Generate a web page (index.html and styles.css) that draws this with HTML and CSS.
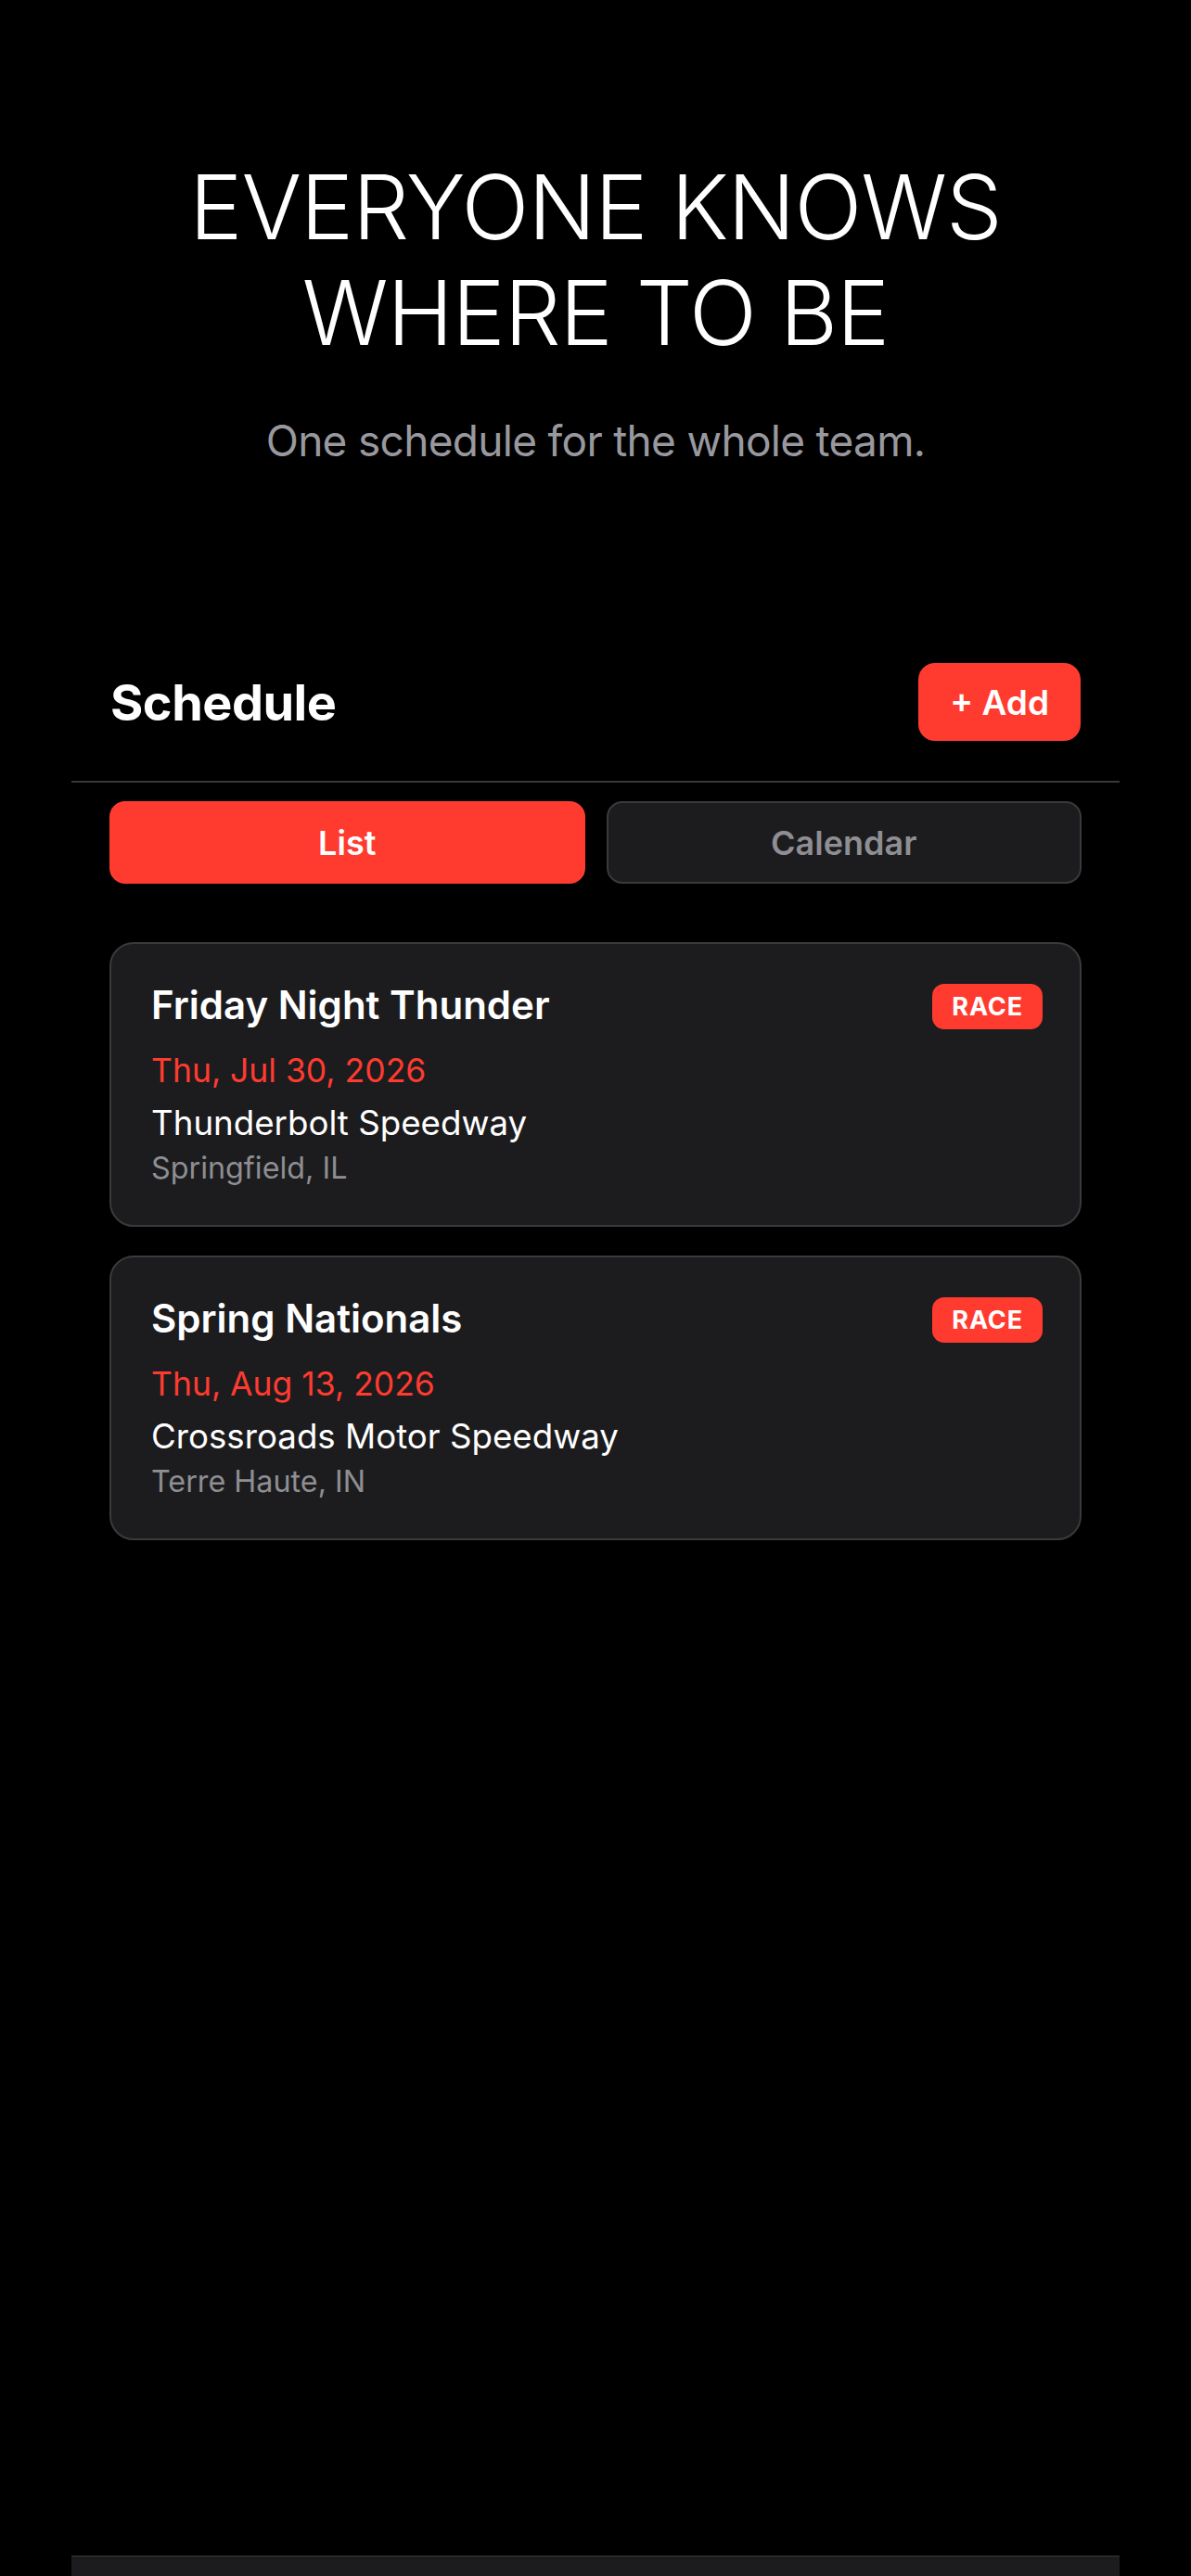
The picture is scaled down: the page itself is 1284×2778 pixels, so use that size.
FILE: index.html
```html
<!DOCTYPE html>
<html lang="en">
<head>
    <meta charset="UTF-8">
    <meta name="viewport" content="width=device-width, initial-scale=1.0">
    <title>Schedule</title>
    <link rel="stylesheet" href="styles.css">
</head>
<body>
    <div class="page">
        <!-- Hero -->
        <header class="hero">
            <h1 class="hero-title">EVERYONE KNOWS<br>WHERE TO BE</h1>
            <p class="hero-sub">One schedule for the whole team.</p>
        </header>

        <!-- Schedule Section -->
        <section class="schedule">
            <div class="schedule-header">
                <h2>Schedule</h2>
                <button class="add-btn">+ Add</button>
            </div>

            <div class="schedule-body">
                <div class="view-toggle">
                    <button class="toggle-btn active">List</button>
                    <button class="toggle-btn">Calendar</button>
                </div>

                <div class="event-list">
                    <div class="event-card">
                        <div class="event-top">
                            <h3>Friday Night Thunder</h3>
                            <span class="badge">RACE</span>
                        </div>
                        <p class="event-date">Thu, Jul 30, 2026</p>
                        <p class="event-venue">Thunderbolt Speedway</p>
                        <p class="event-city">Springfield, IL</p>
                    </div>

                    <div class="event-card">
                        <div class="event-top">
                            <h3>Spring Nationals</h3>
                            <span class="badge">RACE</span>
                        </div>
                        <p class="event-date">Thu, Aug 13, 2026</p>
                        <p class="event-venue">Crossroads Motor Speedway</p>
                        <p class="event-city">Terre Haute, IN</p>
                    </div>
                </div>
            </div>
        </section>

        <div class="tab-bar"></div>
    </div>
</body>
</html>
```

FILE: styles.css
```css
body {
    font-family: Inter, "Noto Sans", sans-serif;
    margin: 0;
    padding: 0;
    background-color: #000;
    color: #fff;
}

.page {
    min-height: 100vh;
    display: flex;
    flex-direction: column;
}

.hero {
    padding: 166px 40px 0;
    text-align: center;
}

.hero-title {
    margin: 0;
    font-size: 96px;
    font-weight: 300;
    line-height: 114px;
    letter-spacing: -1px;
}

.hero-sub {
    margin: 51px 0 0;
    font-size: 46px;
    line-height: 60px;
    color: #98989e;
    letter-spacing: -0.7px;
}

.schedule {
    margin: 210px 77px 0;
}

.schedule-header {
    display: flex;
    justify-content: space-between;
    align-items: center;
    padding: 0 42px 43px;
    border-bottom: 2px solid #38383a;
}

.schedule-header h2 {
    margin: 0;
    font-size: 54px;
    font-weight: 700;
    letter-spacing: -0.5px;
}

button {
    font-family: inherit;
    border: none;
    cursor: pointer;
}

.add-btn {
    height: 84px;
    padding: 0 34px;
    background-color: #ff3b30;
    color: #fff;
    font-size: 37px;
    font-weight: 600;
    border-radius: 18px;
}

.schedule-body {
    padding: 20px 41px 0;
}

.view-toggle {
    display: grid;
    grid-template-columns: 1fr 1fr;
    gap: 23px;
}

.toggle-btn {
    height: 89px;
    background-color: #1c1c1e;
    color: #8e8e93;
    border: 2px solid #3a3a3c;
    border-radius: 17px;
    font-size: 36px;
    font-weight: 600;
}

.toggle-btn.active {
    background-color: #ff3b30;
    border-color: #ff3b30;
    color: #fff;
}

.event-list {
    margin-top: 63px;
    display: flex;
    flex-direction: column;
    gap: 31px;
}

.event-card {
    background-color: #1c1c1e;
    border: 2px solid #3a3a3c;
    border-radius: 26px;
    padding: 42px 40px 42px 43px;
}

.event-top {
    display: flex;
    justify-content: space-between;
    align-items: flex-start;
}

.event-top h3 {
    margin: 0;
    font-size: 42px;
    font-weight: 600;
    line-height: 48px;
}

.badge {
    margin-top: 1px;
    padding: 0 21px;
    height: 49px;
    line-height: 49px;
    background-color: #ff3b30;
    border-radius: 13px;
    font-size: 27px;
    font-weight: 700;
    letter-spacing: 0.9px;
}

.event-card p {
    margin: 0;
}

.event-date {
    margin-top: 24px !important;
    font-size: 35.5px;
    line-height: 41px;
    color: #ff3b30;
}

.event-venue {
    margin-top: 14px !important;
    font-size: 36.7px;
    line-height: 43px;
}

.event-city {
    margin-top: 9px !important;
    font-size: 32.3px;
    line-height: 38px;
    color: #8e8e93;
}

.tab-bar {
    margin: auto 77px 0;
    height: 21px;
    background-color: #1c1c1e;
    border-top: 1px solid #3a3a3c;
}
```
